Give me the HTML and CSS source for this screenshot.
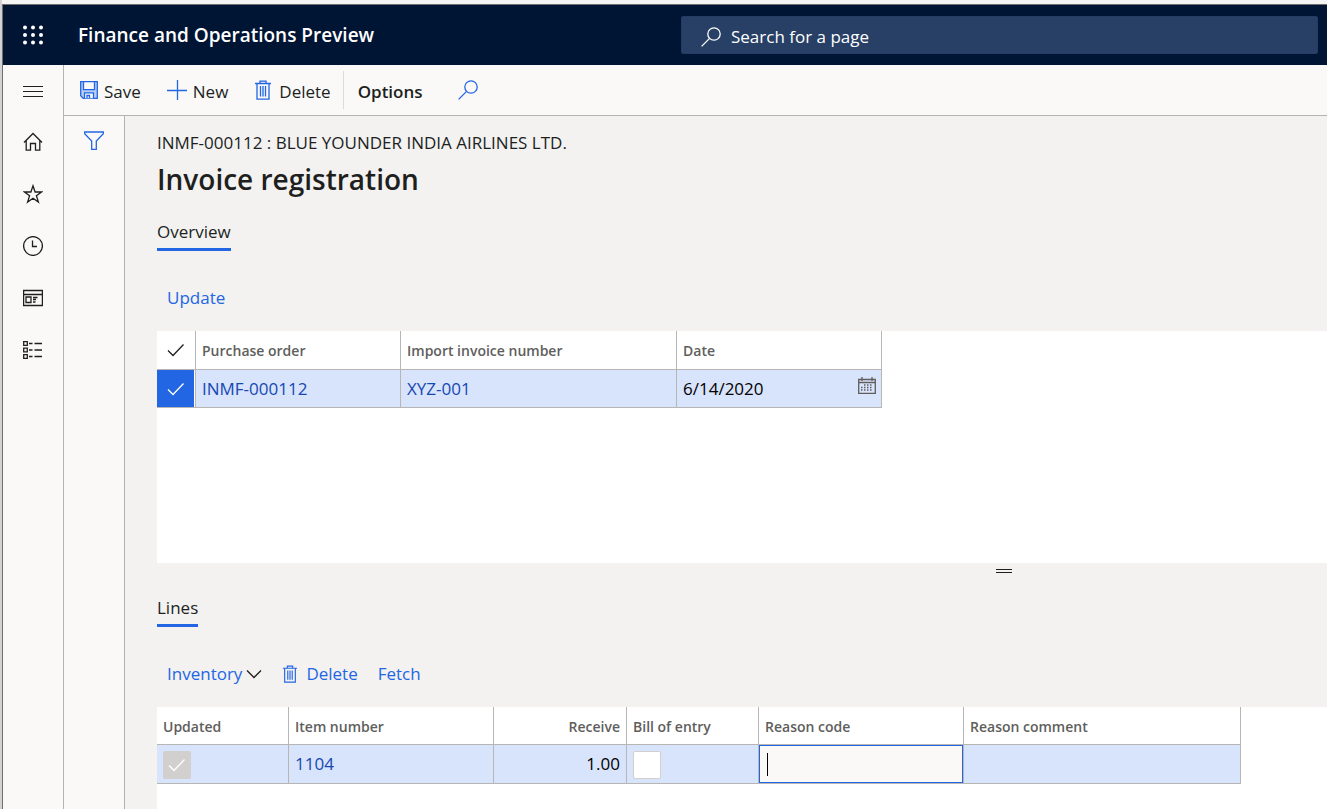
FILE: index.html
```html
<!DOCTYPE html>
<html lang="en">
<head>
<meta charset="utf-8">
<title>Invoice registration</title>
<link rel="stylesheet" href="styles.css">
</head>
<body>
<svg class="sprite" aria-hidden="true">
  <symbol id="i-search" viewBox="0 0 20 20"><circle cx="13" cy="7" r="6.2"/><path d="M8.6 11.4 0.6 19.4"/></symbol>
  <symbol id="i-trash" viewBox="0 0 18 20"><path d="M1 3.5h16M6 3.5V1.2h6v2.3M3 3.5v15.7h12V3.5M6.5 6v10.5M9 6v10.5M11.5 6v10.5"/></symbol>
  <symbol id="i-check" viewBox="0 0 18 14"><path d="M1 7.5 6 12.5 16.5 1.5"/></symbol>
</svg>
<div class="window">
  <header class="topbar">
    <button class="icon-button waffle" aria-label="App launcher">
      <svg class="icon-20" viewBox="0 0 20 20"><g class="dots"><circle cx="2" cy="2.5" r="2"/><circle cx="10" cy="2.5" r="2"/><circle cx="18" cy="2.5" r="2"/><circle cx="2" cy="10" r="2"/><circle cx="10" cy="10" r="2"/><circle cx="18" cy="10" r="2"/><circle cx="2" cy="17.5" r="2"/><circle cx="10" cy="17.5" r="2"/><circle cx="18" cy="17.5" r="2"/></g></svg>
    </button>
    <div class="brand">Finance and Operations Preview</div>
    <label class="search">
      <svg class="icon-20"><use href="#i-search"/></svg>
      <input type="text" placeholder="Search for a page" aria-label="Search for a page">
    </label>
  </header>
  <div class="workspace">
    <nav class="rail" aria-label="Navigation">
      <button class="icon-button" aria-label="Expand"><svg class="icon-20 thin" viewBox="0 0 20 20"><path d="M0 6.500h20M0 11.500h20M0 16.500h20"/></svg></button>
      <button class="icon-button" aria-label="Home"><svg class="icon-20" viewBox="0 0 20 20"><path d="M1 10.5 10 1.5l9 9M3.2 8.5v9.7h4.3v-6.7h5v6.7h4.3V8.5"/></svg></button>
      <button class="icon-button" aria-label="Favorites"><svg class="icon-20" viewBox="0 0 20 20"><path d="M10 1.8 12.1 8h6.4l-5.1 3.8 2 6.3L10 14.3l-5.4 3.8 2-6.3L1.500 8h6.400z"/></svg></button>
      <button class="icon-button" aria-label="Recent"><svg class="icon-20" viewBox="0 0 20 20"><circle cx="10" cy="10" r="9.400"/><path d="M9.500 4.500v6h4.500"/></svg></button>
      <button class="icon-button" aria-label="Workspaces"><svg class="icon-20" viewBox="0 0 20 20"><path d="M.6 2.500h18.800v15H.6zM.6 6.500h18.800M3 9h5v5.500H3zM10 9.500h4.500M10 11.500h3M10 14h2.500"/></svg></button>
      <button class="icon-button" aria-label="Modules"><svg class="icon-20" viewBox="0 0 20 20"><path d="M.7 1.700h3.600v3.600H.7zM.7 8.200h3.600v3.600H.7zM.7 14.700h3.600v3.600H.7zM6 3.500h3.500M11.500 3.500h7.500M6 10h3.500M11.500 10h7.500M6 16.500h3.500M11.500 16.500h7.500"/></svg></button>
    </nav>
    <div class="page">
      <div class="actions">
        <button class="action"><svg class="icon-18" viewBox="0 0 18 18"><path class="tint" d="M.7.700h16.600v16.600H3.200L.7 14.800z"/><path class="paper" d="M3.500.7h11v8h-11zM4.500 17.300v-5.500h9v5.500M7 17v-2.500h2.500V17"/></svg><span>Save</span></button>
        <button class="action"><svg class="icon-20" viewBox="0 0 20 20"><path d="M0 10.500h20M10.500 0v20"/></svg><span>New</span></button>
        <button class="action"><svg class="trash"><use href="#i-trash"/></svg><span>Delete</span></button>
        <button class="action options"><span>Options</span></button>
        <button class="action find" aria-label="Search actions"><svg class="icon-20"><use href="#i-search"/></svg></button>
      </div>
      <div class="body">
        <aside class="filter"><button class="icon-button" aria-label="Filter"><svg class="icon-20" viewBox="0 0 20 20"><path d="M.7 1h18.600v1.800L12.300 10v8.300H7.700V10L.7 2.800z"/></svg></button></aside>
        <main class="content">
          <div class="caption">INMF-000112 : BLUE YOUNDER INDIA AIRLINES LTD.</div>
          <h1>Invoice registration</h1>
          <button class="tab">Overview</button>
          <div class="tools"><button class="tool">Update</button></div>
          <div class="grid grow">
            <table class="invoices">
              <colgroup><col class="w-mark"><col class="w-field"><col class="w-invoice"><col class="w-field"></colgroup>
              <thead><tr>
                <th class="mark"><svg class="check"><use href="#i-check"/></svg></th>
                <th>Purchase order</th><th>Import invoice number</th><th>Date</th>
              </tr></thead>
              <tbody><tr>
                <td class="mark picked"><svg class="check"><use href="#i-check"/></svg></td>
                <td><a href="#">INMF-000112</a></td><td><a href="#">XYZ-001</a></td>
                <td class="date-cell"><div class="date"><input type="text" value="6/14/2020" aria-label="Date"><button aria-label="Open calendar"><svg class="calendar" viewBox="0 0 18 17"><path d="M.7 2.500h16.600v13.800H.7zM.7 5.500h16.600M4 0v4M14 0v4"/><path class="days" d="M3 13h1.500M3 10.500h1.500M6 8h1.500M6 10.500h1.500M6 13h1.500M9 8h1.500M9 10.500h1.500M9 13h1.500M12 8h1.500M12 10.500h1.500M12 13h1.500"/></svg></button></div></td>
              </tr></tbody>
            </table>
          </div>
          <div class="splitter"><span></span></div>
          <button class="tab">Lines</button>
          <div class="tools">
            <button class="tool">Inventory<svg class="chevron" viewBox="0 0 16 10"><path d="M1 1.500 8 8.500 15 1.500"/></svg></button>
            <button class="tool"><svg class="trash"><use href="#i-trash"/></svg>Delete</button>
            <button class="tool">Fetch</button>
          </div>
          <div class="grid lines-grid">
            <table class="lines">
              <colgroup><col class="w-flag"><col class="w-field"><col class="w-amount"><col class="w-flag"><col class="w-field"><col class="w-comment"></colgroup>
              <thead><tr><th>Updated</th><th>Item number</th><th class="num">Receive</th><th>Bill of entry</th><th>Reason code</th><th>Reason comment</th></tr></thead>
              <tbody><tr>
                <td><label class="box"><input type="checkbox" checked disabled aria-label="Updated"><svg class="check"><use href="#i-check"/></svg></label></td>
                <td><a href="#">1104</a></td>
                <td class="num">1.00</td>
                <td><label class="box"><input type="checkbox" aria-label="Bill of entry"></label></td>
                <td class="editing"><div class="editor"><span class="caret"></span><input type="text" aria-label="Reason code"></div></td>
                <td></td>
              </tr></tbody>
            </table>
          </div>
        </main>
      </div>
    </div>
  </div>
</div>
</body>
</html>
```
FILE: styles.css
```css
* { box-sizing: border-box; }
body {
  margin: 0;
  min-height: 100vh;
  display: flex;
  flex-direction: column;
  padding: 4px 0 0 2px;
  background: linear-gradient(90deg, #d2d2d2 2px, #f5f5f5 2px);
  font: 17px/24px "Open Sans", "Noto Sans", sans-serif;
  color: #201f1e;
}
button, input { font: inherit; color: inherit; border: 0; padding: 0; margin: 0; background: none; outline: 0; }
button { display: flex; align-items: center; }
a { color: #1548b0; text-decoration: none; }
svg { fill: none; stroke: currentColor; stroke-width: 1.3; flex: none; }
.sprite { position: absolute; width: 0; height: 0; }
.icon-20 { width: 20px; height: 20px; }
.icon-18 { width: 18px; height: 18px; }
.thin { stroke-width: 1; }
.trash { width: 16px; height: 20px; }
.check { width: 18px; height: 14px; }
.chevron { width: 16px; height: 10px; color: #201f1e; }
.calendar { width: 18px; height: 17px; display: block; }
.icon-button { width: 60px; justify-content: center; }

.window { flex: 1; display: flex; flex-direction: column; border: solid #6e6e6e; border-width: 1px 0 0 1px; background: #faf9f8; }
.topbar { display: flex; align-items: center; height: 60px; padding-right: 9px; background: #001433; color: #fff; }
.dots { fill: #fff; stroke: none; }
.brand { margin-left: 15px; flex: 0 0 603px; font-size: 19px; font-weight: 600; }
.search { flex: 1; display: flex; align-items: center; gap: 10px; height: 38px; padding: 4px 0 0 19px; background: #284066; border: 1px solid #243b66; border-radius: 2px; }
.search input { flex: 1; min-width: 0; }
.search input::placeholder { color: #fff; opacity: 1; }

.workspace { flex: 1; display: flex; }
.rail { flex: 0 0 61px; display: flex; flex-direction: column; gap: 2px; border-right: 1px solid #b5b3b2; }
.rail .icon-button { height: 50px; }
.page { flex: 1; min-width: 0; display: flex; flex-direction: column; }
.actions { display: flex; align-items: center; height: 51px; padding-left: 16px; border-bottom: 1px solid #b5b3b2; }
.action { height: 38px; gap: 6px; margin-right: 26px; }
.action span { padding-top: 3px; }
.action svg { color: #2266e3; }
.action .trash { width: 18px; margin-right: 1px; }
.action:nth-child(3) { margin-right: 12px; }
.options { padding-left: 14px; margin-right: 35px; border-left: 1px solid #dddbda; font-weight: 600; }
.tint { fill: #b9cff8; }
.paper { fill: #faf9f8; }
.body { flex: 1; display: flex; }
.filter { flex: 0 0 61px; border-right: 1px solid #b5b3b2; }
.filter .icon-button { height: 50px; color: #2266e3; }
.content { flex: 1; min-width: 0; display: flex; flex-direction: column; align-items: flex-start; padding: 15px 0 0 32px; background: #f3f2f1; }
h1 { margin: 4px 0 20px; font-size: 28px; line-height: 40px; font-weight: 600; }
.tab { height: 32px; padding-bottom: 4px; border-bottom: 3px solid #2266e3; }
.tools { display: flex; gap: 20px; height: 80px; padding: 13px 10px 0; align-items: center; }
.tool { color: #2266e3; gap: 4px; }
.tool .trash { margin-right: 4px; }
.grid { align-self: stretch; background: #fff; overflow: hidden; }
.grow { flex: 1; }
.lines-grid { height: 102px; }
.splitter { align-self: stretch; height: 32px; padding: 6px 0 0 calc(72% - 3px); }
.splitter span { display: block; width: 16px; height: 4px; border: solid #201f1e; border-width: 1px 0; }

table { table-layout: fixed; border-collapse: separate; border-spacing: 0; }
.invoices { width: 725px; }
.lines { width: 1084px; }
.w-mark { width: 39px; }
.w-field { width: 205px; }
.w-invoice { width: 276px; }
.w-flag { width: 132px; }
.w-amount { width: 133px; }
.w-comment { width: 277px; }
th, td { height: 38px; padding: 0 6px; text-align: left; vertical-align: middle; border: solid #b8b6b4; border-width: 0 1px 1px 0; }
th { padding-top: 2px; font-size: 14px; font-weight: 600; color: #605e5c; }
.invoices th { height: 39px; }
td { background: #d8e3fc; color: #000; }
.num { text-align: right; }
.mark { padding: 0 10px; color: #201f1e; }
.mark .check, .box .check { display: block; }
.picked { background: #2266e3; color: #fff; box-shadow: inset -1px 0 #fff; }
.date { display: flex; align-items: center; }
.date-cell { padding-right: 5px; }
.date input { flex: 1; min-width: 0; }
.date button { padding-bottom: 6px; color: #605e5c; }
.days { stroke-width: 1.500; }
.box { display: grid; width: 28px; height: 28px; margin-top: 2px; place-items: center; }
.box input { grid-area: 1 / 1; appearance: none; width: 28px; height: 28px; background: #fff; border: 1px solid #d2d0ce; border-radius: 2px; }
.box input:disabled { background: #d2d0ce; }
.box .check { grid-area: 1 / 1; color: #fff; }
.editing { padding: 0; }
.editor { display: flex; align-items: center; height: 38px; padding: 0 7px; background: #faf9f8; border: 1px solid #2266e3; }
.editor input { flex: 1; min-width: 0; }
.caret { width: 1px; height: 23px; background: #000; }
```
